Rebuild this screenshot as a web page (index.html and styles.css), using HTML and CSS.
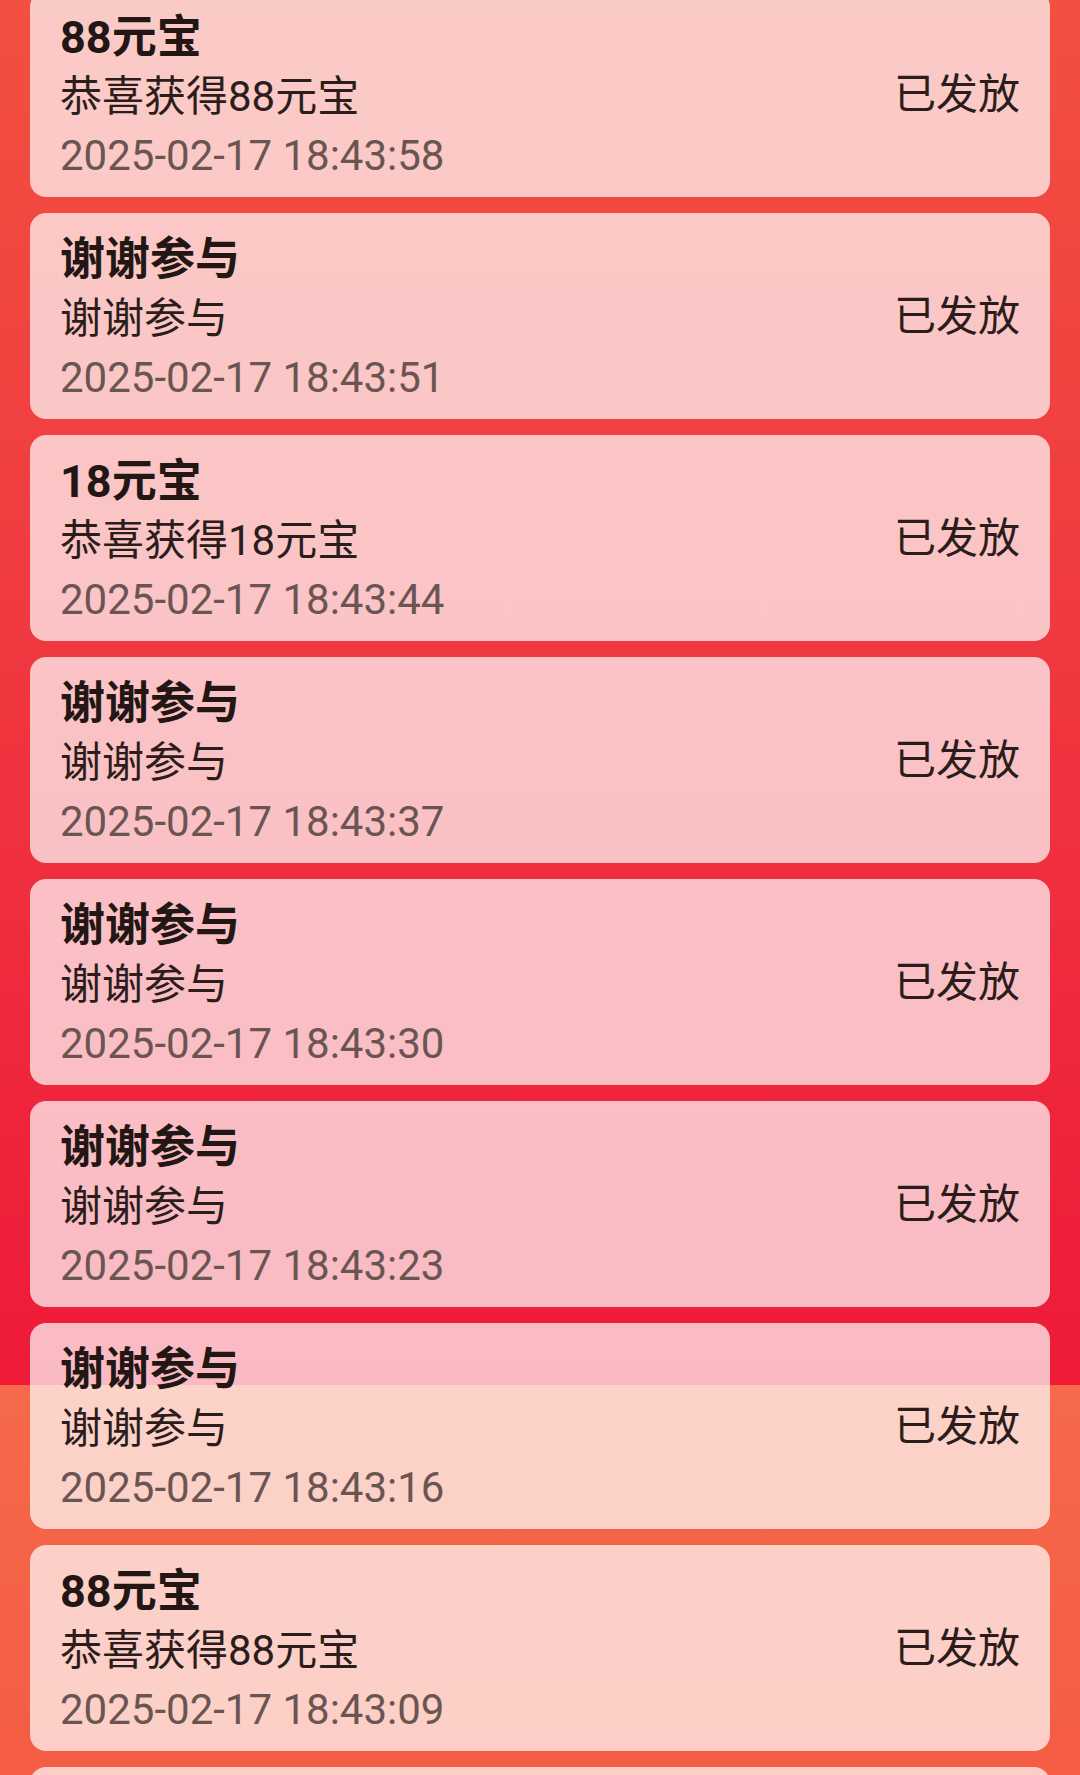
FILE: index.html
```html
<!DOCTYPE html>
<html lang="zh-CN">
<head>
<meta charset="utf-8">
<title>中奖记录</title>
<link rel="stylesheet" href="styles.css">
</head>
<body>
<div class="page">
  <ul class="records">
    <li class="card"><div class="info"><div class="title">88元宝</div><div class="desc">恭喜获得88元宝</div><div class="time">2025-02-17 18:43:58</div></div><div class="status">已发放</div></li>
    <li class="card"><div class="info"><div class="title">谢谢参与</div><div class="desc">谢谢参与</div><div class="time">2025-02-17 18:43:51</div></div><div class="status">已发放</div></li>
    <li class="card"><div class="info"><div class="title">18元宝</div><div class="desc">恭喜获得18元宝</div><div class="time">2025-02-17 18:43:44</div></div><div class="status">已发放</div></li>
    <li class="card"><div class="info"><div class="title">谢谢参与</div><div class="desc">谢谢参与</div><div class="time">2025-02-17 18:43:37</div></div><div class="status">已发放</div></li>
    <li class="card"><div class="info"><div class="title">谢谢参与</div><div class="desc">谢谢参与</div><div class="time">2025-02-17 18:43:30</div></div><div class="status">已发放</div></li>
    <li class="card"><div class="info"><div class="title">谢谢参与</div><div class="desc">谢谢参与</div><div class="time">2025-02-17 18:43:23</div></div><div class="status">已发放</div></li>
    <li class="card"><div class="info"><div class="title">谢谢参与</div><div class="desc">谢谢参与</div><div class="time">2025-02-17 18:43:16</div></div><div class="status">已发放</div></li>
    <li class="card"><div class="info"><div class="title">88元宝</div><div class="desc">恭喜获得88元宝</div><div class="time">2025-02-17 18:43:09</div></div><div class="status">已发放</div></li>
    <li class="card"></li>
  </ul>
</div>
</body>
</html>
```
FILE: styles.css
```css
* { box-sizing: border-box; }
html, body { margin: 0; padding: 0; }
body {
  font-family: Roboto, "Noto Sans CJK SC", sans-serif;
}
.page {
  width: 1080px;
  height: 1775px;
  overflow: hidden;
  background: linear-gradient(to bottom, #f25040 0px, #f03a40 600px, #ee1a38 1385px, #f6694a 1385px, #f45c44 1775px);
}
.records {
  list-style: none;
  margin: -9px 0 0 0;
  padding: 0 30px;
  display: flex;
  flex-direction: column;
  gap: 16px;
}
.card {
  height: 206px;
  flex-shrink: 0;
  border-radius: 16px;
  background: rgba(255, 255, 255, 0.7);
  padding: 17px 30px 0 30px;
  display: flex;
  justify-content: space-between;
  align-items: flex-start;
}
.info {
  display: flex;
  flex-direction: column;
}
.title, .desc, .time {
  font-size: 42px;
  line-height: 59px;
  white-space: nowrap;
}
.title {
  font-size: 45px;
  font-weight: 700;
  color: #221714;
}
.desc {
  color: #2b1d1b;
}
.time {
  color: #6a5552;
}
.status {
  align-self: center;
  margin-top: -17px;
  font-size: 42px;
  line-height: 59px;
  color: #2b1d1b;
}
```
